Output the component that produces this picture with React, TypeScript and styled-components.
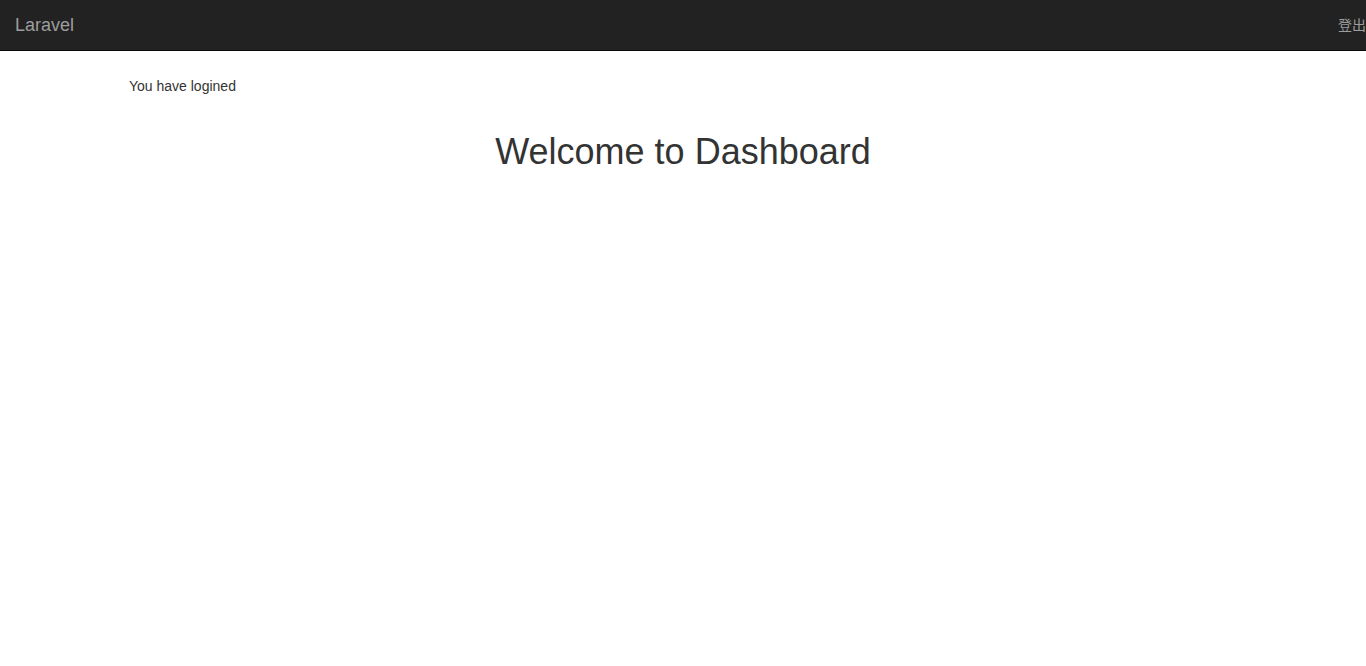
import React from "react";
import styled, { createGlobalStyle } from "styled-components";

const Global = createGlobalStyle`
  html, body { margin: 0; padding: 0; background: #fff; }
  body {
    font-family: "Liberation Sans", Arial, "Noto Sans CJK SC", sans-serif;
    font-size: 14px;
    line-height: 20px;
    color: #333;
    overflow: hidden;
  }
`;

const Navbar = styled.nav`
  height: 50px;
  background: #222;
  border-bottom: 1px solid #080808;
  display: flex;
  align-items: flex-start;
  justify-content: space-between;
`;

const Brand = styled.a`
  font-size: 18px;
  line-height: 20px;
  padding: 15px;
  color: #9d9d9d;
  text-decoration: none;
`;

const NavLink = styled.a`
  font-size: 14px;
  line-height: 20px;
  padding: 15px 0;
  color: #9d9d9d;
  text-decoration: none;
  font-family: "Liberation Sans", "Noto Sans CJK SC", sans-serif;
`;

const Main = styled.main`
  padding: 25px 0 0 129px;
`;

const Notice = styled.p`
  margin: 0;
`;

const Title = styled.h1`
  margin: 36px 0 0 -129px;
  text-align: center;
  font-size: 36px;
  font-weight: 500;
  line-height: 1.1;
  color: #333;
`;

export default function App() {
  return (
    <>
      <Global />
      <Navbar>
        <Brand href="#">Laravel</Brand>
        <NavLink href="#">登出</NavLink>
      </Navbar>
      <Main>
        <Notice>You have logined</Notice>
        <Title>Welcome to Dashboard</Title>
      </Main>
    </>
  );
}
